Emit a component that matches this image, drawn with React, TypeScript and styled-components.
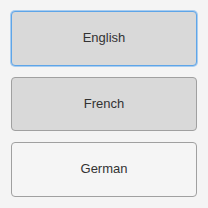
import React from "react";
import styled, { createGlobalStyle } from "styled-components";

const GlobalStyle = createGlobalStyle`
  html, body {
    margin: 0;
    padding: 0;
    background: #f4f4f4;
  }
`;

const List = styled.div`
  box-sizing: border-box;
  width: 208px;
  height: 208px;
  padding: 11px;
  display: flex;
  flex-direction: column;
  gap: 11px;
`;

const Option = styled.button<{ $active?: boolean; $selected?: boolean }>`
  flex: 1;
  box-sizing: border-box;
  border-radius: 4px;
  border: 1px solid ${(p) => (p.$active ? "#5ea5e8" : "#a0a0a0")};
  box-shadow: ${(p) => (p.$active ? "0 0 0 1px #a9cdf0" : "none")};
  background: ${(p) => (p.$selected ? "#d9d9d9" : "#f5f5f5")};
  font-family: "Liberation Sans", Arial, sans-serif;
  font-size: 13px;
  color: #333;
  padding: 0 0 2px;
`;

const languages = [
  { name: "English", selected: true, active: true },
  { name: "French", selected: true, active: false },
  { name: "German", selected: false, active: false },
];

function App() {
  return (
    <>
      <GlobalStyle />
      <List>
        {languages.map((l) => (
          <Option key={l.name} $selected={l.selected} $active={l.active}>
            {l.name}
          </Option>
        ))}
      </List>
    </>
  );
}

export default App;
